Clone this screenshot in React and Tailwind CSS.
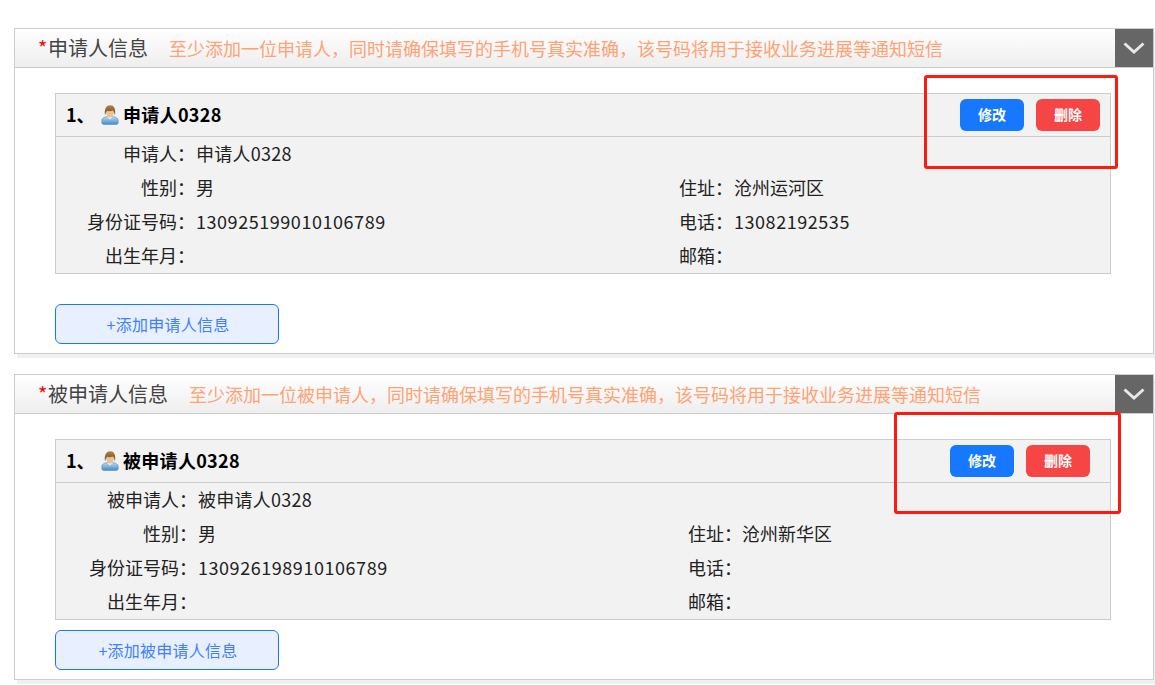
const FONT = '"Noto Sans CJK SC", "Noto Sans", sans-serif';

function Avatar() {
  return (
    <svg width="18" height="20" viewBox="0 0 18 20" className="shrink-0">
      <defs>
        <linearGradient id="shirt" x1="0" y1="0" x2="0" y2="1">
          <stop offset="0" stopColor="#b4dcf5" />
          <stop offset="1" stopColor="#4688c4" />
        </linearGradient>
        <linearGradient id="hair" x1="0" y1="0" x2="0" y2="1">
          <stop offset="0" stopColor="#b0803f" />
          <stop offset="1" stopColor="#6e4a20" />
        </linearGradient>
      </defs>
      <path d="M0.8 15.5 C0.8 13.2 3 12.2 6 11.6 L12 11.6 C15 12.2 17.2 13.2 17.2 15.5 L17.2 17.5 C17.2 19 16 19.6 14.5 19.6 L3.5 19.6 C2 19.6 0.8 19 0.8 17.5 Z" fill="url(#shirt)" stroke="#5b8db8" strokeWidth="0.6" />
      <path d="M6 11.8 L9 14.6 L12 11.8 Z" fill="#e6f4fc" />
      <path d="M5 6 C5 2 13 2 13 6 C13 10 11 12.6 9 12.6 C7 12.6 5 10 5 6 Z" fill="#ecc096" />
      <path d="M4 10.5 C3 3.5 5.5 0.3 9.3 0.3 C13 0.3 15 3.5 14 10.5 C13.5 8.4 13.2 6.6 12 5.4 C10 6.4 7.8 6.4 6.2 5.8 C5 7 4.5 8.6 4 10.5 Z" fill="url(#hair)" />
    </svg>
  );
}

function Row({ children }) {
  return <div className="contents">{children}</div>;
}

function Cell({ label, value }) {
  const isNumber = /^\d+$/.test(value);
  const hasDigits = /\d/.test(value);
  return (
    <>
      <div className="h-[34px] pr-px leading-[33px] text-right whitespace-nowrap">{label ? label + '：' : ''}</div>
      <div
        className={
          isNumber
            ? 'h-[34px] leading-[33px] whitespace-nowrap tracking-[0.55px]'
            : hasDigits
              ? 'h-[34px] leading-[33px] whitespace-nowrap tracking-[0.25px]'
              : 'h-[34px] leading-[33px] whitespace-nowrap'
        }
      >
        {value}
      </div>
    </>
  );
}

function Panel({ title, hint, person, rows, gridClass, addText, bodyClass, addClass, buttonsClass, noteClass }) {
  return (
    <section className="relative border border-[#cccccc] bg-white shadow-[3px_4px_0_#f0f0f0]">
      <header className="flex h-[39px] items-center border-b border-[#cccccc] bg-gradient-to-b from-white to-[#eeeeee] pl-[23px]">
        <span className="w-[10px] text-[20px] leading-none text-[#ff0000]">*</span>
        <span className="text-[20px] text-[#444444]">{title}</span>
        <span className="ml-[21px] text-[18px] text-[#ffa274]">{hint}</span>
        <div className="ml-auto flex h-[38px] w-[38px] items-center justify-center self-start bg-[#666666]">
          <svg width="22" height="12" viewBox="0 0 22 12" fill="none">
            <path d="M1.5 1.5 L11 10 L20.5 1.5" stroke="#e8e8e8" strokeWidth="3" />
          </svg>
        </div>
      </header>
      <div className={bodyClass}>
        <div className="border border-[#cccccc] bg-[#f2f2f2] text-[18px] text-[#222222]">
          <div className="flex h-[43px] items-center border-b border-[#cccccc] pl-[10px]">
            <span className="w-[35px] pb-px font-bold text-black">1、</span>
            <Avatar />
            <span className="ml-[4px] pb-[2px] font-bold tracking-[0.3px] text-black">{person}</span>
            <div className={buttonsClass}>
              <button className="h-8 w-16 rounded-md bg-[#1677ff] pb-px text-[14px] font-bold text-white">修改</button>
              <button className="h-8 w-16 rounded-md bg-[#f54545] pb-px text-[14px] font-bold text-white">删除</button>
            </div>
          </div>
          <div className={gridClass}>
            {rows.map((r, i) => (
              <Row key={i}>
                <Cell label={r[0]} value={r[1]} />
                <Cell label={r[2]} value={r[3]} />
              </Row>
            ))}
          </div>
        </div>
        <button className={addClass}>{addText}</button>
      </div>
      <div className={noteClass} />
    </section>
  );
}

export default function App() {
  return (
    <div className="h-[685px] overflow-hidden bg-white pl-[14px] pr-px pt-[28px]" style={{ fontFamily: FONT }}>
      <Panel
        title="申请人信息"
        hint="至少添加一位申请人，同时请确保填写的手机号真实准确，该号码将用于接收业务进展等通知短信"
        person="申请人0328"
        rows={[
          ['申请人', '申请人0328', '', ''],
          ['性别', '男', '住址', '沧州运河区'],
          ['身份证号码', '130925199010106789', '电话', '13082192535'],
          ['出生年月', '', '邮箱', ''],
        ]}
        gridClass="grid grid-cols-[140px_483px_55px_1fr]"
        addText="+添加申请人信息"
        bodyClass="pl-10 pr-[42px] pt-[25px] pb-[9px]"
        addClass="mt-[30px] block h-10 w-[224px] rounded-md border border-[#1677ff] bg-[#e8f0ff] pl-[2px] text-[16px] tracking-[0.25px] text-[#4080ff]"
        buttonsClass="ml-auto mr-[10px] flex gap-3"
        noteClass="absolute left-[909px] top-[46px] h-[94px] w-[194px] rounded-[3px] border-[3px] border-[#ff1a0d]"
      />
      <div className="mt-[20px]">
        <Panel
          title="被申请人信息"
          hint="至少添加一位被申请人，同时请确保填写的手机号真实准确，该号码将用于接收业务进展等通知短信"
          person="被申请人0328"
          rows={[
            ['被申请人', '被申请人0328', '', ''],
            ['性别', '男', '住址', '沧州新华区'],
            ['身份证号码', '130926198910106789', '电话', ''],
            ['出生年月', '', '邮箱', ''],
          ]}
          gridClass="grid grid-cols-[142px_490px_54px_1fr]"
          addText="+添加被申请人信息"
          bodyClass="pl-10 pr-[42px] pt-[25px] pb-[9px]"
          addClass="mt-[10px] block h-10 w-[224px] rounded-md border border-[#1677ff] bg-[#e8f0ff] pl-[2px] text-[16px] tracking-[0.25px] text-[#4080ff]"
          buttonsClass="ml-auto mr-[20px] flex gap-3"
          noteClass="absolute left-[879px] top-[37px] h-[102px] w-[227px] rounded-[3px] border-[3px] border-[#ff1a0d]"
        />
      </div>
    </div>
  );
}
